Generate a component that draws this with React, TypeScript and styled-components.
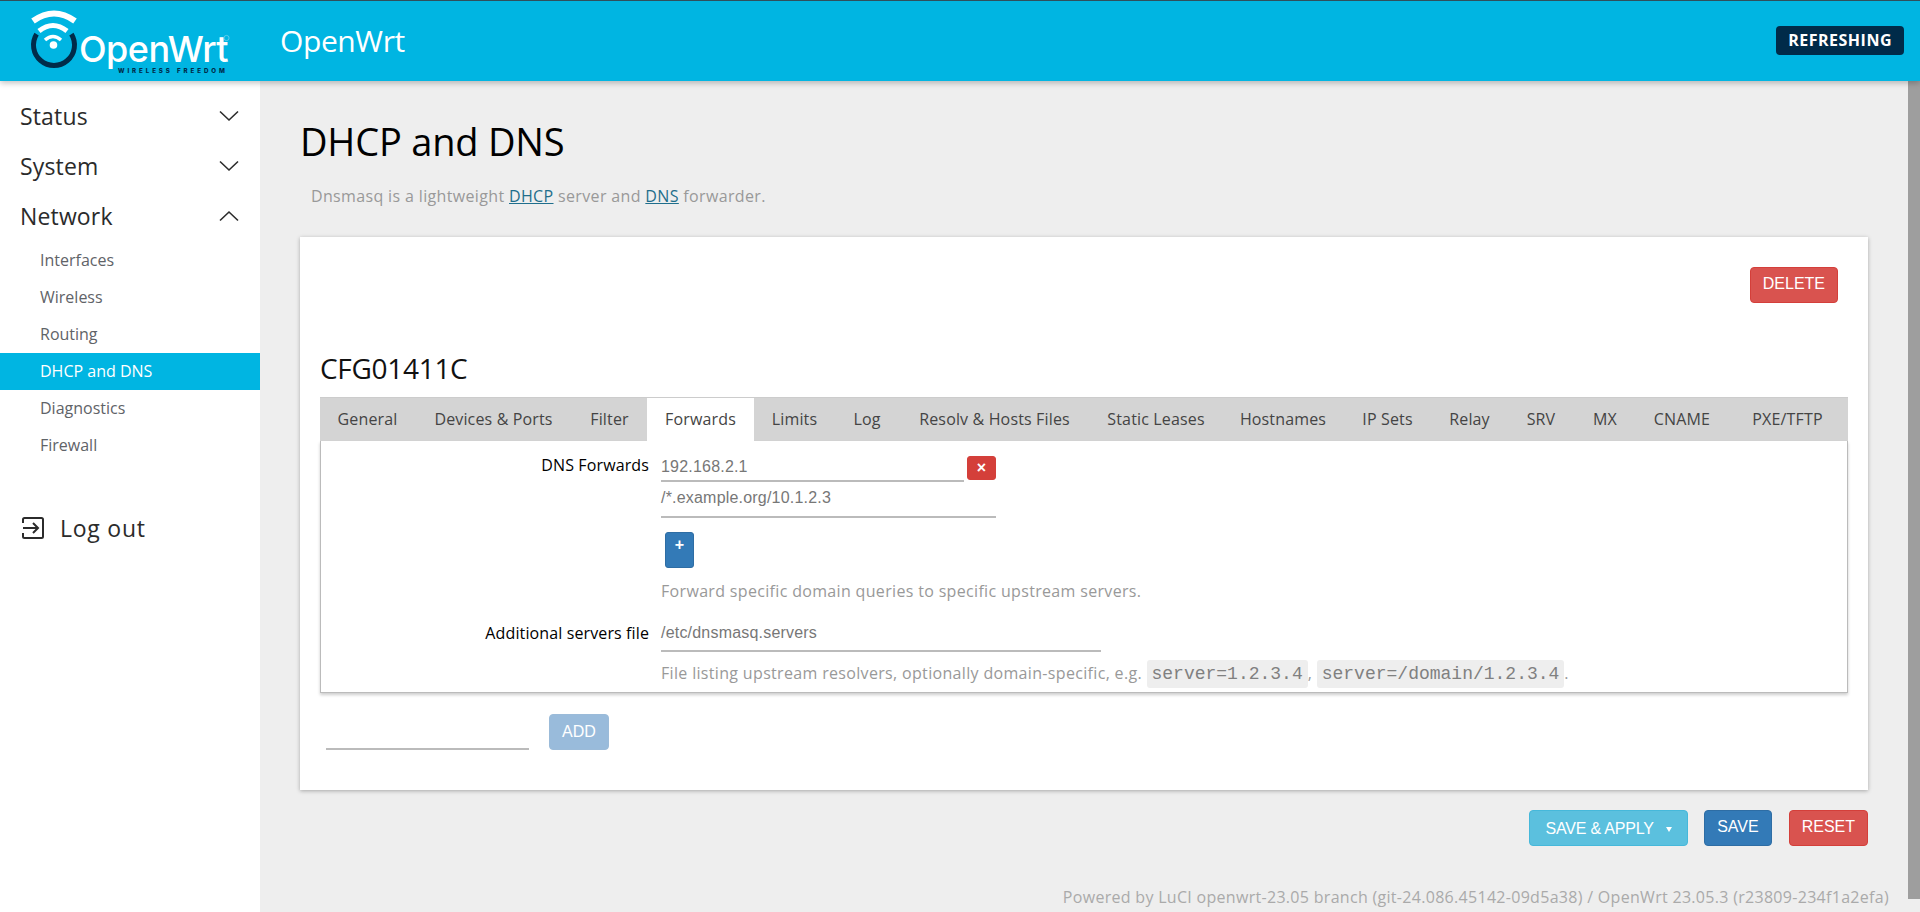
import React from "react";
import styled, { createGlobalStyle } from "styled-components";

const GlobalStyle = createGlobalStyle`
	html, body {
		margin: 0;
		padding: 0;
		height: 912px;
		overflow: hidden;
		background: #eeeeee;
	}
	* {
		box-sizing: border-box;
	}
`;

const Page = styled.div`
	display: flex;
	flex-direction: column;
	width: 1920px;
	height: 912px;
	overflow: hidden;
	font-family: "Open Sans", "Noto Sans", sans-serif;
`;
const Header = styled.header`
	position: relative;
	z-index: 2;
	flex: none;
	display: flex;
	align-items: center;
	height: 81px;
	padding: 0 16px 0 0;
	background: #00b5e2;
	border-top: 1px solid #2f4f5c;
	box-shadow: 0 2px 6px rgba(0, 0, 0, 0.25);
`;
const LogoBox = styled.div`
	flex: none;
	width: 280px;
	height: 80px;
`;
const Brand = styled.div`
	flex: 1;
	font-size: 30px;
	color: #fff;
	letter-spacing: -0.4px;
	margin-top: -1px;
`;
const Badge = styled.span`
	height: 29px;
	padding: 0 12px;
	line-height: 28px;
	font-size: 16px;
	font-weight: 700;
	letter-spacing: 0.5px;
	color: #fff;
	background: #002b49;
	border-radius: 4px;
	margin-top: -1px;
`;
const Body = styled.div`
	flex: 1;
	display: flex;
	min-height: 0;
`;
const Sidebar = styled.nav`
	flex: none;
	width: 260px;
	padding-top: 10px;
	background: #fff;
`;
const MenuHead = styled.div`
	display: flex;
	align-items: center;
	justify-content: space-between;
	height: 50px;
	padding: 0 21px 0 20px;
	font-size: 23px;
	letter-spacing: 0.15px;
	color: #2b2b2b;
`;
const SubMenu = styled.div`
	margin-top: 1px;
`;
const SubItem = styled.div<{ $active?: boolean }>`
	height: 37px;
	line-height: 36px;
	padding-left: 40px;
	font-size: 16px;
	color: ${(p) => (p.$active ? "#fff" : "#5f6368")};
	background: ${(p) => (p.$active ? "#00b5e2" : "transparent")};
`;
const Logout = styled.div`
	display: flex;
	align-items: center;
	gap: 15px;
	height: 50px;
	margin-top: 39px;
	padding-left: 21px;
	font-size: 23px;
	color: #2b2b2b;
	letter-spacing: 0.75px;
`;
const Main = styled.main`
	position: relative;
	flex: 1;
	min-width: 0;
	padding: 0 40px;
`;
const Title = styled.h1`
	margin: 36px 0 0;
	height: 50px;
	line-height: 48px;
	font-size: 38px;
	font-weight: 400;
	color: #000;
	letter-spacing: -0.2px;
`;
const Description = styled.p`
	margin: 17px 0 0 11px;
	height: 24px;
	line-height: 24px;
	font-size: 16px;
	color: #999;
	letter-spacing: 0.35px;
	& a {
		color: #1f6e8c;
		text-decoration: underline;
	}
`;
const Card = styled.section`
	height: 553px;
	margin-top: 29px;
	padding: 30px 20px 0;
	background: #fff;
	box-shadow: 0 1px 4px rgba(0, 0, 0, 0.3);
`;
const ButtonBase = styled.button<{ $kind: "danger" | "primary" | "info" }>`
	height: 36px;
	border-radius: 4px;
	border: 1px solid
		${(p) => (p.$kind === "danger" ? "#d43f3a" : p.$kind === "primary" ? "#2e6da4" : "#46b8da")};
	background: ${(p) => (p.$kind === "danger" ? "#d9534f" : p.$kind === "primary" ? "#337ab7" : "#5bc0de")};
	color: #fff;
	font-family: "Liberation Sans", Arial, sans-serif;
	font-size: 16px;
	padding: 0 12px 2px;
`;
const SaveApply = styled(ButtonBase)`
	width: 159px;
	margin-right: -1px;
	padding: 2px 0 0;
	letter-spacing: -0.2px;
`;
const DeleteRow = styled.div`
	display: flex;
	justify-content: flex-end;
	padding-right: 10px;
`;
const SectionTitle = styled.h3`
	margin: 47px 0 0;
	height: 36px;
	line-height: 36px;
	font-size: 28px;
	font-weight: 400;
	color: #111;
	letter-spacing: -0.3px;
`;
const TabsBar = styled.div`
	display: flex;
	height: 44px;
	margin-top: 11px;
	background: #d4d4d4;
	border-top: 1px solid #ccc;
`;
const Tab = styled.div<{ $active?: boolean; $w: number }>`
	flex: none;
	width: ${(p) => p.$w}px;
	text-align: center;
	line-height: 43px;
	font-size: 16px;
	letter-spacing: 0.15px;
	white-space: nowrap;
	color: #444;
	background: ${(p) => (p.$active ? "#fff" : "transparent")};
`;
const TabBody = styled.div`
	height: 252px;
	padding-top: 9px;
	border: 1px solid #bbb;
	border-top: 0;
	box-shadow: 0 2px 3px rgba(0, 0, 0, 0.2);
`;
const Field = styled.div<{ $gap?: number }>`
	display: grid;
	grid-template-columns: 328px 1fr;
	column-gap: 12px;
	margin-top: ${(p) => p.$gap ?? 0}px;
`;
const Label = styled.label`
	padding-top: 4px;
	text-align: right;
	font-size: 16px;
	line-height: 22px;
	color: #000;
	letter-spacing: 0.12px;
`;
const Values = styled.div`
	display: flex;
	flex-direction: column;
	align-items: flex-start;
`;
const ValueRow = styled.div`
	display: flex;
	align-items: flex-end;
	gap: 3px;
`;
const TextInput = styled.div<{ $w: number; $h: number; $lh: number }>`
	width: ${(p) => p.$w}px;
	height: ${(p) => p.$h}px;
	border-bottom: 2px solid #bbb;
	font-family: "Liberation Sans", Arial, sans-serif;
	font-size: 16px;
	letter-spacing: 0.2px;
	line-height: ${(p) => p.$lh}px;
	color: #777;
`;
const SmallButton = styled.button<{ $kind: "danger" | "primary" }>`
	width: 29px;
	height: ${(p) => (p.$kind === "danger" ? 24 : 36)}px;
	margin-bottom: ${(p) => (p.$kind === "danger" ? 2 : 0)}px;
	padding: 0 0 ${(p) => (p.$kind === "danger" ? 0 : 10)}px;
	border-radius: 3px;
	border: 1px solid ${(p) => (p.$kind === "danger" ? "#d43f3a" : "#2e6da4")};
	background: ${(p) => (p.$kind === "danger" ? "#d43f3a" : "#337ab7")};
	color: #fff;
	font-family: "Liberation Sans", Arial, sans-serif;
	font-size: 16px;
	font-weight: 700;
	line-height: 20px;
`;
const PlusWrap = styled.div`
	margin: 14px 0 2px 4px;
`;
const Help = styled.div`
	margin-top: 10px;
	height: 22px;
	line-height: 22px;
	font-size: 16px;
	color: #999;
	letter-spacing: 0.33px;
	white-space: nowrap;
`;
const Code = styled.code`
	padding: 4px 5px;
	background: #eee;
	border-radius: 3px;
	font-family: "Liberation Mono", "DejaVu Sans Mono", monospace;
	font-size: 18px;
	letter-spacing: 0;
	color: #808080;
`;
const AddRow = styled.div`
	display: flex;
	align-items: flex-end;
	gap: 20px;
	margin: 21px 0 0 6px;
`;
const AddInput = styled.div`
	width: 203px;
	height: 34px;
	border-bottom: 2px solid #bbb;
`;
const AddButton = styled.button`
	width: 60px;
	height: 36px;
	border: 1px solid #9bbbd9;
	border-radius: 4px;
	background: #99bbdb;
	color: #fff;
	font-family: "Liberation Sans", Arial, sans-serif;
	font-size: 16px;
	padding: 0;
`;
const Actions = styled.div`
	display: flex;
	justify-content: flex-end;
	gap: 17px;
	margin-top: 20px;
`;
const Caret = styled.span`
	display: inline-block;
	margin-left: 12px;
	border-top: 5px solid #fff;
	border-left: 3.5px solid transparent;
	border-right: 3.5px solid transparent;
	vertical-align: 2px;
`;
const Footer = styled.footer`
	margin: 39px -21px 0 0;
	text-align: right;
	font-size: 16px;
	line-height: 24px;
	color: #aaa;
	letter-spacing: 0.3px;
	white-space: nowrap;
`;
const Scrollbar = styled.div`
	flex: none;
	width: 12px;
	height: 818px;
	background: #9e9e9e;
`;

const Logo = () => (
	<svg width="280" height="80" viewBox="0 0 280 80">
		<path d="M33 20 Q54 5 75 20" fill="none" stroke="#fff" strokeWidth="6" />
		<path d="M39 30 Q53 19 67 30" fill="none" stroke="#fff" strokeWidth="5" />
		<path d="M45 39 Q53 32 61 39" fill="none" stroke="#fff" strokeWidth="3.5" />
		<circle cx="53.5" cy="44" r="3.8" fill="#fff" />
		<path d="M36.6 33.1 A20.5 20.5 0 1 0 71.4 33.1" fill="none" stroke="#002b49" strokeWidth="5" />
		<text x="79" y="61" fontFamily="Inter, sans-serif" fontWeight="500" fontSize="36" fill="#fff" letterSpacing="-0.5">
			OpenWrt
		</text>
		<text x="118" y="72" fontFamily="Inter, sans-serif" fontWeight="800" fontSize="6.2" fill="#002b49" letterSpacing="2.9">
			WIRELESS FREEDOM
		</text>
		<circle cx="226.5" cy="37" r="2.6" fill="none" stroke="#7fd6ee" strokeWidth="0.7" />
	</svg>
);

const Chevron = ({ up }: { up?: boolean }) => (
	<svg width="20" height="12" viewBox="0 0 20 12">
		<path d={up ? "M1 10.5 L10 2 L19 10.5" : "M1 1.5 L10 10 L19 1.5"} fill="none" stroke="#2b2b2b" strokeWidth="1.6" />
	</svg>
);

const LogoutIcon = () => (
	<svg width="24" height="24" viewBox="0 0 24 24" fill="none" stroke="#2b2b2b" strokeWidth="2">
		<path d="M2 7 V3.5 A1.5 1.5 0 0 1 3.5 2 H20.5 A1.5 1.5 0 0 1 22 3.5 V20.5 A1.5 1.5 0 0 1 20.5 22 H3.5 A1.5 1.5 0 0 1 2 20.5 V17" />
		<path d="M2 12 H17 M12 7 L17 12 L12 17" />
	</svg>
);

const tabs: [string, number][] = [
	["General", 95],
	["Devices & Ports", 157],
	["Filter", 75],
	["Forwards", 107],
	["Limits", 81],
	["Log", 64],
	["Resolv & Hosts Files", 191],
	["Static Leases", 132],
	["Hostnames", 122],
	["IP Sets", 87],
	["Relay", 77],
	["SRV", 66],
	["MX", 62],
	["CNAME", 92],
	["PXE/TFTP", 119],
];

const App = () => {
	return (
		<Page>
			<GlobalStyle />
			<Header>
				<LogoBox>
					<Logo />
				</LogoBox>
				<Brand>OpenWrt</Brand>
				<Badge>REFRESHING</Badge>
			</Header>
			<Body>
				<Sidebar>
					<MenuHead>
						Status <Chevron />
					</MenuHead>
					<MenuHead>
						System <Chevron />
					</MenuHead>
					<MenuHead>
						Network <Chevron up />
					</MenuHead>
					<SubMenu>
						<SubItem>Interfaces</SubItem>
						<SubItem>Wireless</SubItem>
						<SubItem>Routing</SubItem>
						<SubItem $active>DHCP and DNS</SubItem>
						<SubItem>Diagnostics</SubItem>
						<SubItem>Firewall</SubItem>
					</SubMenu>
					<Logout>
						<LogoutIcon />
						Log out
					</Logout>
				</Sidebar>
				<Main>
					<Title>DHCP and DNS</Title>
					<Description>
						Dnsmasq is a lightweight <a href="#dhcp">DHCP</a> server and <a href="#dns">DNS</a> forwarder.
					</Description>
					<Card>
						<DeleteRow>
							<ButtonBase $kind="danger">DELETE</ButtonBase>
						</DeleteRow>
						<SectionTitle>CFG01411C</SectionTitle>
						<TabsBar>
							{tabs.map(([name, w]) => (
								<Tab key={name} $w={w} $active={name === "Forwards"}>
									{name}
								</Tab>
							))}
						</TabsBar>
						<TabBody>
							<Field>
								<Label>DNS Forwards</Label>
								<Values>
									<ValueRow>
										<TextInput $w={303} $h={32} $lh={34}>
											192.168.2.1
										</TextInput>
										<SmallButton $kind="danger">×</SmallButton>
									</ValueRow>
									<TextInput $w={335} $h={36} $lh={32}>
										/*.example.org/10.1.2.3
									</TextInput>
									<PlusWrap>
										<SmallButton $kind="primary">+</SmallButton>
									</PlusWrap>
									<Help>Forward specific domain queries to specific upstream servers.</Help>
								</Values>
							</Field>
							<Field $gap={16}>
								<Label>Additional servers file</Label>
								<Values>
									<TextInput $w={440} $h={34} $lh={30}>
										/etc/dnsmasq.servers
									</TextInput>
									<Help>
										File listing upstream resolvers, optionally domain-specific, e.g. <Code>server=1.2.3.4</Code>,{" "}
										<Code>server=/domain/1.2.3.4</Code>.
									</Help>
								</Values>
							</Field>
						</TabBody>
						<AddRow>
							<AddInput />
							<AddButton>ADD</AddButton>
						</AddRow>
					</Card>
					<Actions>
						<SaveApply $kind="info">
							SAVE &amp; APPLY
							<Caret />
						</SaveApply>
						<ButtonBase $kind="primary">SAVE</ButtonBase>
						<ButtonBase $kind="danger">RESET</ButtonBase>
					</Actions>
					<Footer>
						Powered by LuCI openwrt-23.05 branch (git-24.086.45142-09d5a38) / OpenWrt 23.05.3 (r23809-234f1a2efa)
					</Footer>
				</Main>
				<Scrollbar />
			</Body>
		</Page>
	);
};

export default App;
